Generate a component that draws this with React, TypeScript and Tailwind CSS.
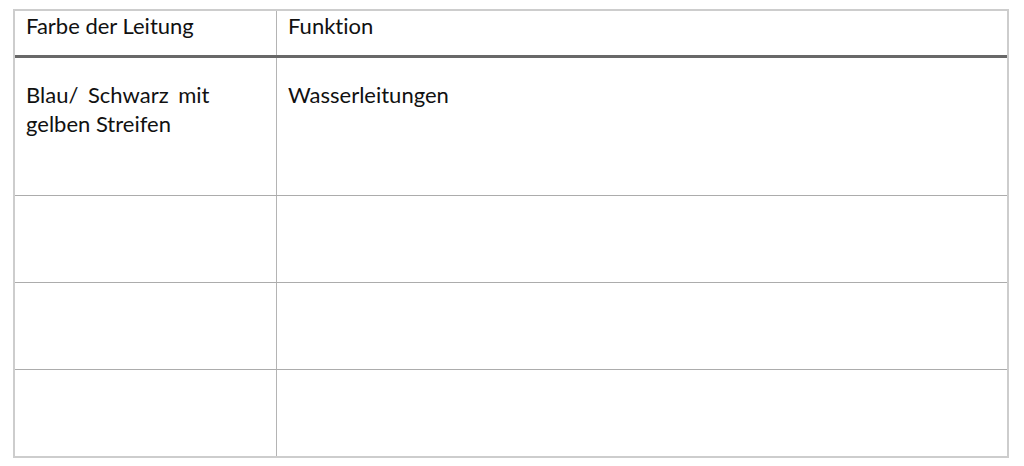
import React from 'react'

const ROWS = [
  { farbe: ['Blau/ Schwarz mit', 'gelben Streifen'], funktion: 'Wasserleitungen' },
  { farbe: [], funktion: '' },
  { farbe: [], funktion: '' },
  { farbe: [], funktion: '' },
]

const App = () => {
  return (
    <div className="w-[1024px] h-[466px] bg-white overflow-hidden" style={{ fontFamily: 'Lato, "Noto Sans", sans-serif' }}>
      <div className="ml-[13px] mt-[9px] w-[996px] border-2 border-[#cdcdcd] text-[22px] leading-[29px] text-[#111] [font-variant-ligatures:none]">
        {/* header */}
        <div className="grid grid-cols-[262px_1fr] h-[47px] border-b-[3px] border-[#686868]">
          <div className="border-r border-[#b4b4b4] pl-[11px]">Farbe der Leitung</div>
          <div className="pl-[11px]">Funktion</div>
        </div>

        {ROWS.map((row, i) => (
          <div
            key={i}
            className={
              i === 0
                ? 'grid grid-cols-[262px_1fr] h-[138px] border-b border-[#acacac]'
                : i === ROWS.length - 1
                ? 'grid grid-cols-[262px_1fr] h-[86px]'
                : 'grid grid-cols-[262px_1fr] h-[87px] border-b border-[#acacac]'
            }
          >
            <div className="border-r border-[#b4b4b4] pl-[11px] pt-[22px]">
              {row.farbe.map((line, j) => (
                <div key={line} className={j === 0 ? '[word-spacing:4px]' : ''}>{line}</div>
              ))}
            </div>
            <div className="pl-[11px] pt-[22px]">{row.funktion}</div>
          </div>
        ))}
      </div>
    </div>
  )
}

export default App
